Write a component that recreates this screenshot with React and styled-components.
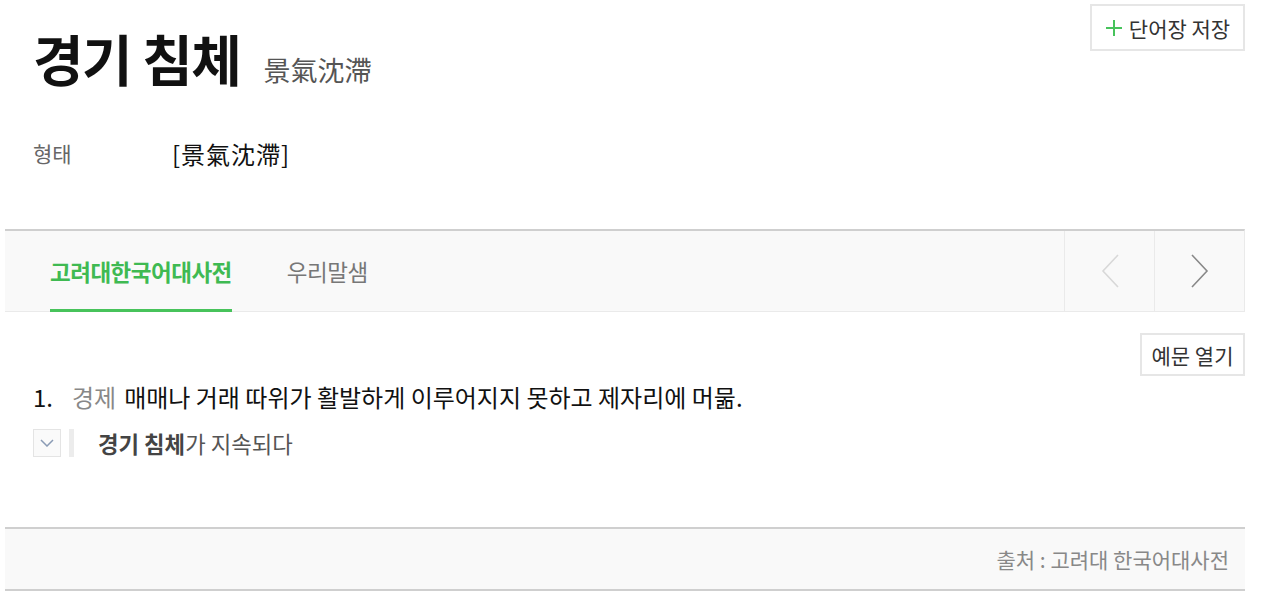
import React from "react"
import styled, { createGlobalStyle } from "styled-components"

const GlobalStyle = createGlobalStyle`
  body {
    margin: 0;
    background: #fff;
    font-family: "Noto Sans CJK KR", "Noto Sans", sans-serif;
    color: #111;
  }
`

const Page = styled.div`
  width: 1240px;
  margin-left: 5px;
`

const Header = styled.div`
  display: flex;
  justify-content: space-between;
  align-items: flex-start;
  padding: 4px 0 0 28px;
`

const TitleRow = styled.div`
  display: flex;
  align-items: baseline;
  padding-top: 20px;
  gap: 23px;
`

const Title = styled.h1`
  margin: 0;
  font-size: 55px;
  font-weight: 700;
  letter-spacing: -1.5px;
  line-height: 66px;
  color: #111;
`

const Hanja = styled.span`
  font-size: 27px;
  color: #555;
`

const OutlineButton = styled.button`
  display: flex;
  align-items: center;
  justify-content: center;
  gap: 6px;
  width: ${p => p.w}px;
  height: ${p => p.h}px;
  padding: 0;
  border: 2px solid #e6e6e6;
  background: #fff;
  font-family: inherit;
  font-size: 21px;
  color: #333;
  cursor: pointer;
`

const FormRow = styled.div`
  display: flex;
  align-items: center;
  margin-top: 43px;
  padding-left: 28px;
  height: 40px;
`

const FormLabel = styled.span`
  width: 139px;
  font-size: 21px;
  color: #666;
`

const FormValue = styled.span`
  font-size: 24px;
  color: #111;
  letter-spacing: 1px;
`

const TabBar = styled.div`
  margin-top: 56px;
  display: flex;
  height: 80px;
  background: #f9f9f9;
  border-top: 2px solid #cfcfcf;
  border-bottom: 1px solid #eaeaea;
  border-right: 1px solid #eaeaea;
`

const Tabs = styled.div`
  flex: 1;
  display: flex;
  gap: 55px;
  padding-left: 45px;
`

const Tab = styled.div`
  display: flex;
  align-items: center;
  font-size: 22.5px;
  font-weight: ${p => (p.active ? 700 : 400)};
  color: ${p => (p.active ? "#3fba52" : "#777")};
  border-bottom: 3px solid ${p => (p.active ? "#47c35b" : "transparent")};
  margin-bottom: -1px;
  padding-top: 1px;
  letter-spacing: -0.5px;
`

const NavCell = styled.div`
  width: 89px;
  display: flex;
  align-items: center;
  justify-content: center;
  border-left: 1px solid #eaeaea;
`

const Body = styled.div`
  padding: 21px 0 0 28px;
`

const BodyTop = styled.div`
  display: flex;
  justify-content: flex-end;
`

const DefRow = styled.div`
  display: flex;
  align-items: center;
  font-size: 24px;
  height: 40px;
  margin-top: 0;
  color: #111;
`

const DefNum = styled.span`
  width: 39px;
`

const Field = styled.span`
  color: #888;
  margin-right: 8px;
`

const ExampleRow = styled.div`
  display: flex;
  align-items: center;
  margin-top: 7px;
  height: 40px;
`

const ToggleBox = styled.div`
  width: 26px;
  height: 26px;
  border: 1px solid #e4e4e4;
  background: #fafafa;
  display: flex;
  align-items: center;
  justify-content: center;
`

const Bar = styled.div`
  width: 5px;
  height: 28px;
  background: #ececec;
  margin: 0 24px 0 8px;
`

const ExampleText = styled.span`
  font-size: 22.3px;
  color: #555;
  & b {
    font-weight: 700;
    color: #444;
  }
`

const Footer = styled.div`
  margin-top: 64px;
  height: 60px;
  background: #f9f9f9;
  border-top: 2px solid #cfcfcf;
  border-bottom: 2px solid #cfcfcf;
  display: flex;
  align-items: center;
  justify-content: flex-end;
  padding-right: 16px;
  font-size: 21px;
  color: #888;
`

const Chevron = ({ dir, color }) => (
  <svg width="20" height="36" viewBox="0 0 20 36" fill="none">
    <path
      d={dir === "left" ? "M18 2 L3 18 L18 34" : "M2 2 L17 18 L2 34"}
      stroke={color}
      strokeWidth="1.6"
    />
  </svg>
)

const PlusIcon = () => (
  <svg width="18" height="18" viewBox="0 0 18 18" fill="none">
    <path d="M9 1 V17 M1 9 H17" stroke="#47c35b" strokeWidth="2" />
  </svg>
)

const App = () => (
  <>
    <GlobalStyle />
    <Page>
      <Header>
        <TitleRow>
          <Title>경기 침체</Title>
          <Hanja>景氣沈滯</Hanja>
        </TitleRow>
        <OutlineButton w={155} h={47}>
          <PlusIcon />단어장 저장
        </OutlineButton>
      </Header>
      <FormRow>
        <FormLabel>형태</FormLabel>
        <FormValue>[景氣沈滯]</FormValue>
      </FormRow>
      <TabBar>
        <Tabs>
          <Tab active>고려대한국어대사전</Tab>
          <Tab>우리말샘</Tab>
        </Tabs>
        <NavCell>
          <Chevron dir="left" color="#d8d8d8" />
        </NavCell>
        <NavCell>
          <Chevron dir="right" color="#888" />
        </NavCell>
      </TabBar>
      <Body>
        <BodyTop>
          <OutlineButton w={105} h={43}>예문 열기</OutlineButton>
        </BodyTop>
        <DefRow>
          <DefNum>1.</DefNum>
          <Field>경제</Field>
          매매나 거래 따위가 활발하게 이루어지지 못하고 제자리에 머묾.
        </DefRow>
        <ExampleRow>
          <ToggleBox>
            <svg width="14" height="8" viewBox="0 0 14 8" fill="none">
              <path d="M1 1 L7 7 L13 1" stroke="#8a9bb5" strokeWidth="1.5" />
            </svg>
          </ToggleBox>
          <Bar />
          <ExampleText>
            <b>경기 침체</b>가 지속되다
          </ExampleText>
        </ExampleRow>
      </Body>
      <Footer>출처 : 고려대 한국어대사전</Footer>
    </Page>
  </>
)

export default App
